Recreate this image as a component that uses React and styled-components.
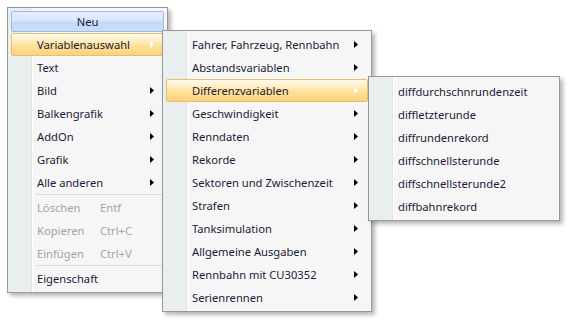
import React from "react";
import styled, { createGlobalStyle } from "styled-components";

const GlobalStyle = createGlobalStyle`
	html, body {
		margin: 0;
		padding: 0;
		background: #ffffff;
	}
	body {
		font-family: "Noto Sans", "Open Sans", sans-serif;
	}
`;

const Desktop = styled.div`
	position: relative;
	width: 570px;
	height: 321px;
	overflow: hidden;
	background: #ffffff;
`;

const Menu = styled.div`
	position: absolute;
	left: ${(p) => p.$left}px;
	top: ${(p) => p.$top}px;
	width: ${(p) => p.$width}px;
	box-sizing: border-box;
	padding: ${(p) => p.$padTop || 2}px 3px 2px;
	border: 1px solid #979797;
	background: linear-gradient(
		to right,
		#e9eeee 0,
		#e9eeee 23px,
		#e2e3e3 23px,
		#e2e3e3 24px,
		#ffffff 24px,
		#ffffff 25px,
		#f6f6f6 25px
	);
	box-shadow: 3px 3px 4px rgba(0, 0, 0, 0.28);
	display: flex;
	flex-direction: column;
	z-index: ${(p) => p.$z};
`;

const NewButton = styled.div`
	height: 19px;
	margin: 1px 0 1px;
	border: 1px solid #9fbbe4;
	border-radius: 2px;
	background: linear-gradient(
		#e4eefd 0%,
		#d6e6fb 48%,
		#c3d9f7 52%,
		#cadef8 100%
	);
	display: flex;
	align-items: center;
	justify-content: center;
	font-size: 11.2px;
	color: #1b1b38;
`;

const Item = styled.div`
	height: 23px;
	box-sizing: border-box;
	display: flex;
	align-items: center;
	padding-left: 25px;
	padding-right: 8px;
	font-size: 11.2px;
	color: ${(p) => (p.$disabled ? "#a3a3a3" : "#1b1b38")};
	border: 1px solid ${(p) => (p.$active ? "#e2c06c" : "transparent")};
	border-radius: 2px;
	background: ${(p) =>
		p.$active
			? "linear-gradient(#fffaec 0%, #fff0c4 30%, #fee3a0 50%, #fdd27c 100%)"
			: "transparent"};
`;

const Label = styled.span`
	flex: ${(p) => (p.$fixed ? `0 0 ${p.$fixed}px` : "1")};
	white-space: nowrap;
`;

const Shortcut = styled.span`
	flex: 1;
	white-space: nowrap;
`;

const Arrow = styled.svg`
	width: 4px;
	height: 7px;
	margin-right: 1px;
	flex: none;
`;

const Separator = styled.div`
	height: 2px;
	margin-left: 25px;
	border-top: 1px solid #e0e0e0;
	box-sizing: border-box;
`;

function SubArrow({ light }) {
	return (
		<Arrow viewBox="0 0 4 7">
			<polygon points="0,0 4,3.5 0,7" fill={light ? "#ffffff" : "#000000"} />
		</Arrow>
	);
}

function MenuItem({ label, sub, active, disabled, shortcut }) {
	return (
		<Item $active={active} $disabled={disabled}>
			{shortcut ? (
				<>
					<Label $fixed={63}>{label}</Label>
					<Shortcut>{shortcut}</Shortcut>
				</>
			) : (
				<Label>{label}</Label>
			)}
			{sub && <SubArrow light={active} />}
		</Item>
	);
}

const mainItems = [
	{ label: "Variablenauswahl", sub: true, active: true },
	{ label: "Text" },
	{ label: "Bild", sub: true },
	{ label: "Balkengrafik", sub: true },
	{ label: "AddOn", sub: true },
	{ label: "Grafik", sub: true },
	{ label: "Alle anderen", sub: true },
];

const editItems = [
	{ label: "Löschen", shortcut: "Entf", disabled: true },
	{ label: "Kopieren", shortcut: "Ctrl+C", disabled: true },
	{ label: "Einfügen", shortcut: "Ctrl+V", disabled: true },
];

const varItems = [
	"Fahrer, Fahrzeug, Rennbahn",
	"Abstandsvariablen",
	"Differenzvariablen",
	"Geschwindigkeit",
	"Renndaten",
	"Rekorde",
	"Sektoren und Zwischenzeit",
	"Strafen",
	"Tanksimulation",
	"Allgemeine Ausgaben",
	"Rennbahn mit CU30352",
	"Serienrennen",
];

const diffItems = [
	"diffdurchschnrundenzeit",
	"diffletzterunde",
	"diffrundenrekord",
	"diffschnellsterunde",
	"diffschnellsterunde2",
	"diffbahnrekord",
];

export default function App() {
	return (
		<Desktop>
			<GlobalStyle />
			<Menu $left={7} $top={7} $width={161} $z={1}>
				<NewButton>Neu</NewButton>
				{mainItems.map((item) => (
					<MenuItem key={item.label} {...item} />
				))}
				<Separator />
				{editItems.map((item) => (
					<MenuItem key={item.label} {...item} />
				))}
				<Separator />
				<MenuItem label="Eigenschaft" />
			</Menu>
			<Menu $left={162} $top={30} $width={210} $z={2}>
				{varItems.map((label) => (
					<MenuItem
						key={label}
						label={label}
						sub
						active={label === "Differenzvariablen"}
					/>
				))}
			</Menu>
			<Menu $left={368} $top={76} $width={192} $padTop={3} $z={3}>
				{diffItems.map((label) => (
					<MenuItem key={label} label={label} />
				))}
			</Menu>
		</Desktop>
	);
}
